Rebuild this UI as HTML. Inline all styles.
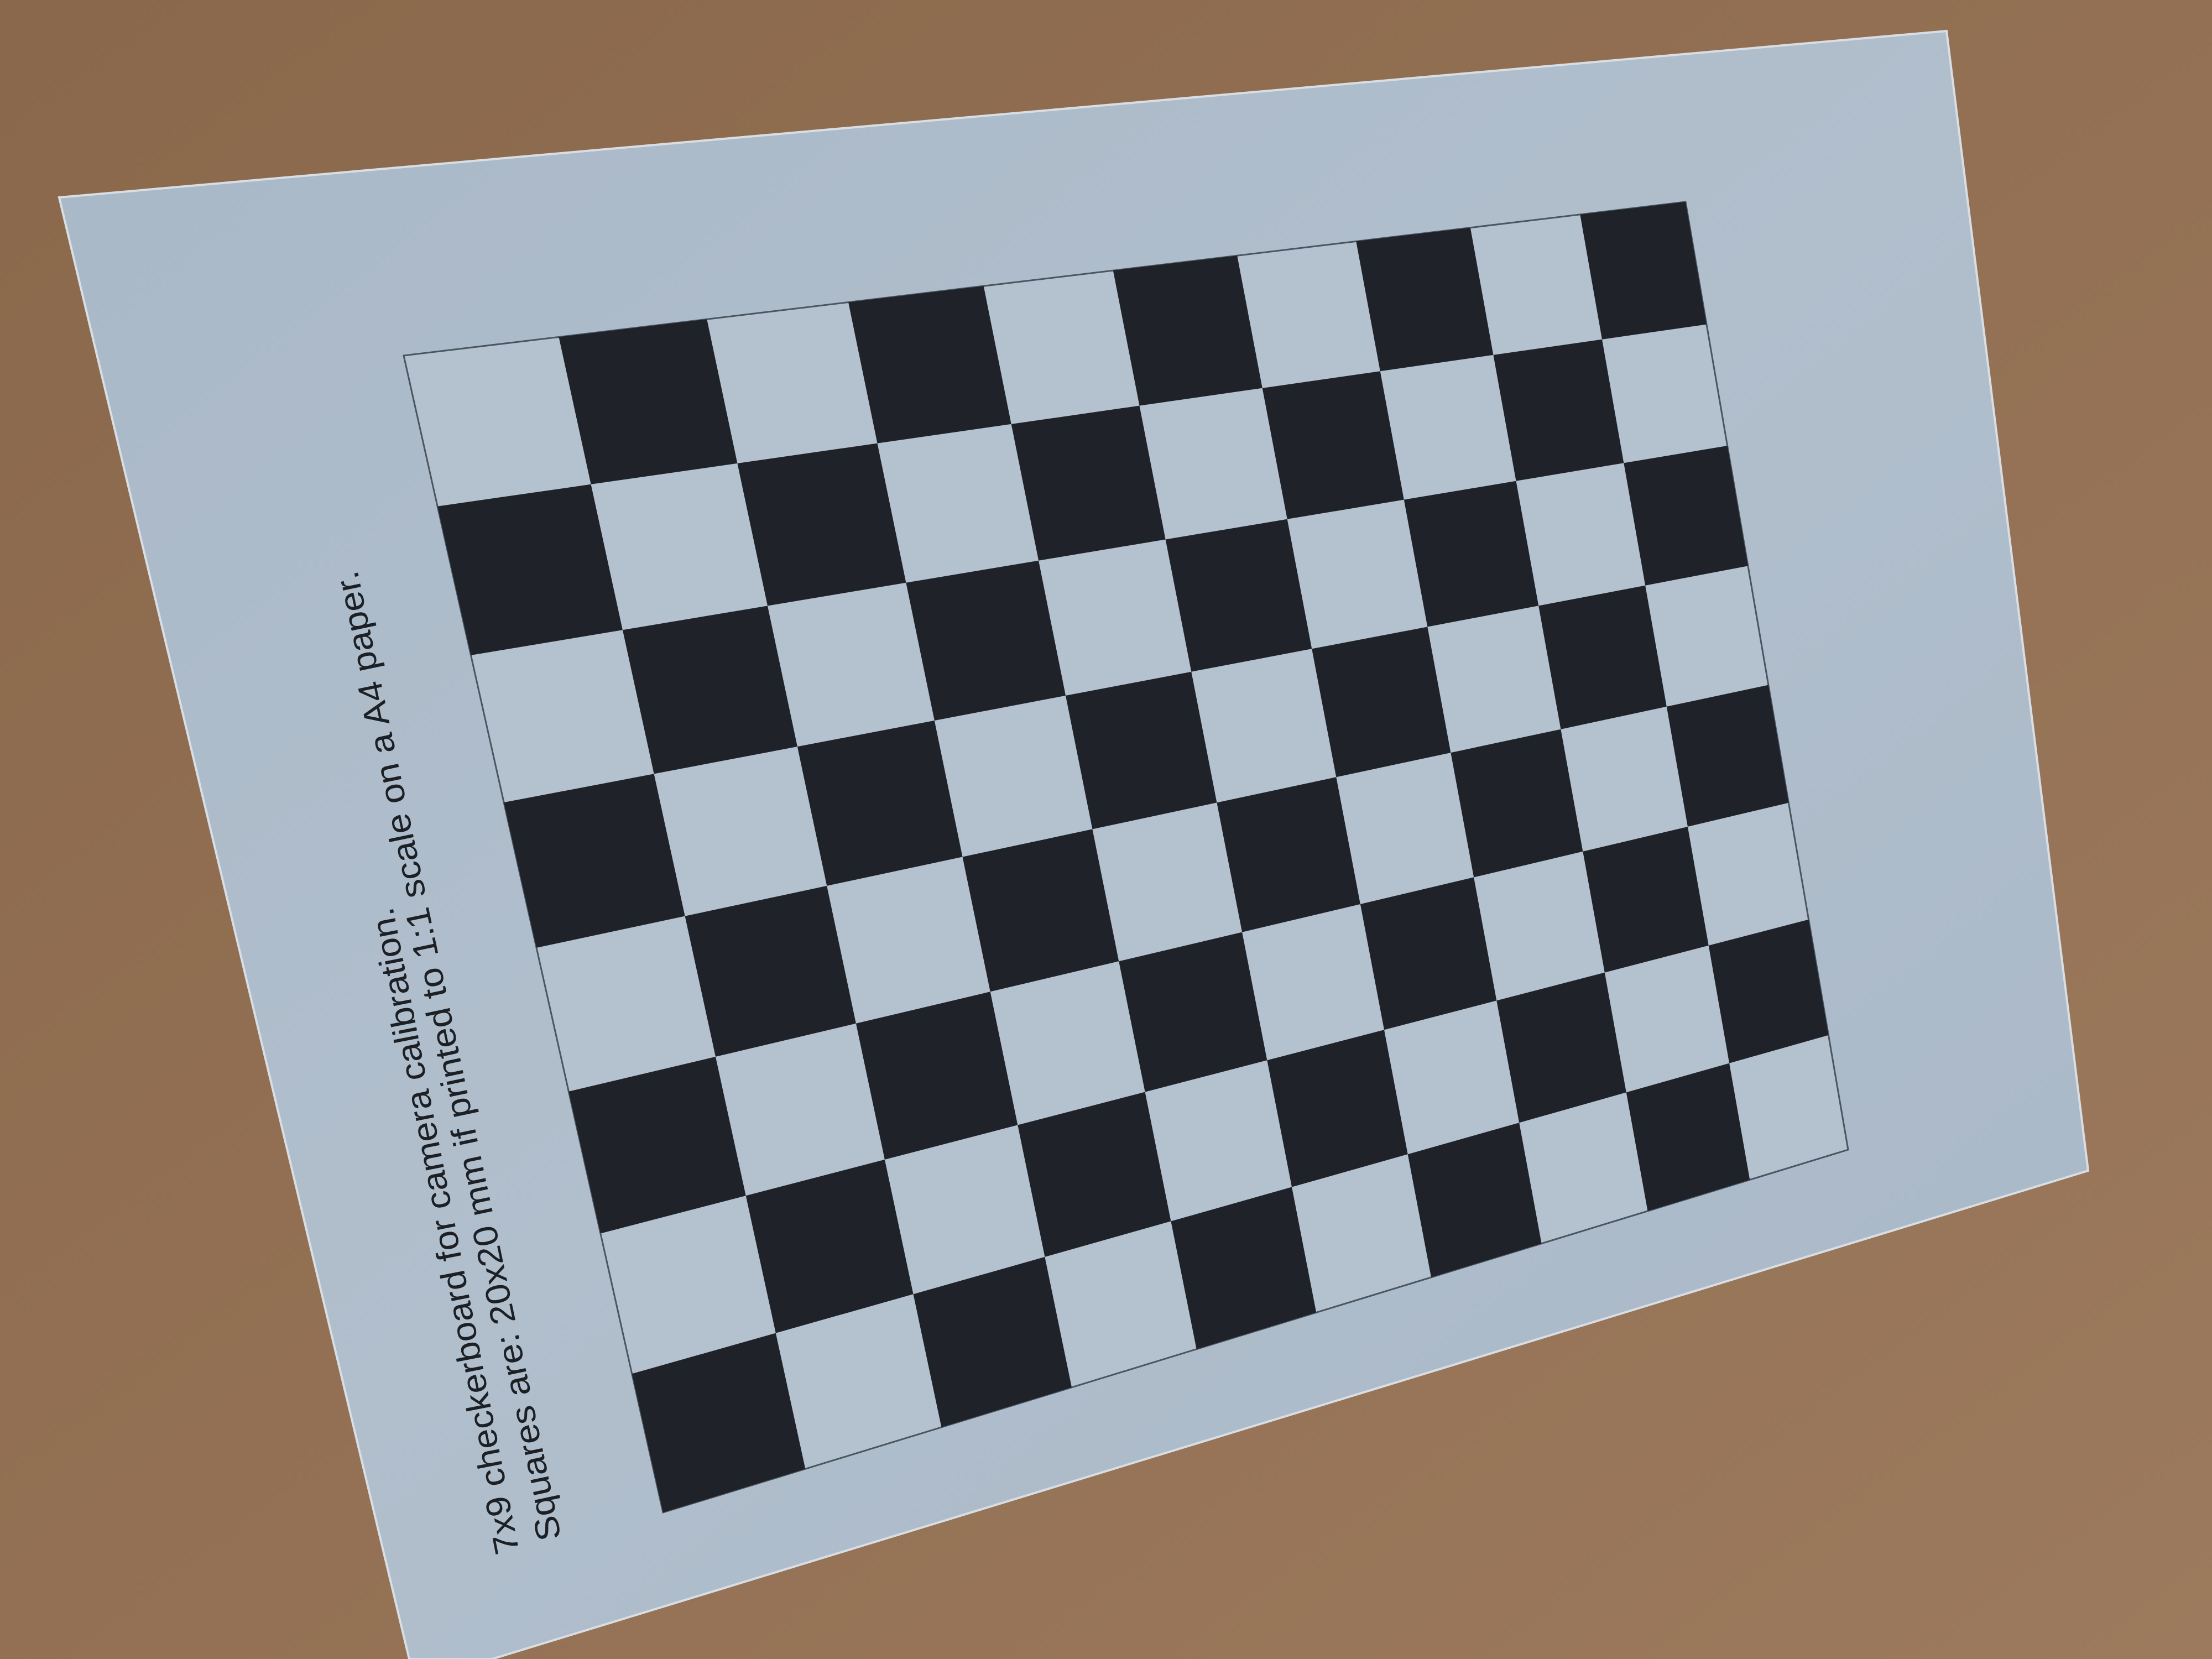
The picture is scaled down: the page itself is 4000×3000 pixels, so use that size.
<!DOCTYPE html>
<html><head><meta charset="utf-8"><style>
html,body{margin:0;padding:0;width:4000px;height:3000px;overflow:hidden;background:#94704f}
svg{display:block}
</style></head><body>
<svg id="s" width="4000" height="3000" viewBox="0 0 4000 3000" xmlns="http://www.w3.org/2000/svg">
<defs>
<linearGradient id="bg" x1="0" y1="0" x2="1" y2="1">
<stop offset="0" stop-color="#8a684b"/><stop offset="0.6" stop-color="#957255"/><stop offset="1" stop-color="#9c7a5d"/>
</linearGradient>
<linearGradient id="pp" x1="0" y1="0" x2="1" y2="1">
<stop offset="0" stop-color="#a9b8c7"/><stop offset="0.5" stop-color="#b1bfcd"/><stop offset="1" stop-color="#a8b7c6"/>
</linearGradient>
</defs>
<rect width="4000" height="3000" fill="url(#bg)"/>
<polygon points="107,357 3520,56 3776,2117 890,3000 740,3000" fill="url(#pp)" stroke="#d8dee4" stroke-width="4"/>
<g id="board"></g>
<g font-family="Liberation Sans, Arial, sans-serif" fill="#1c1f24">
<text transform="translate(939,2806) rotate(-101.1)" font-size="62" textLength="1190" lengthAdjust="spacingAndGlyphs">7x9 checkerboard for camera calibration.</text>
<text transform="translate(1015,2781) rotate(-101.9)" font-size="62" textLength="1790" lengthAdjust="spacingAndGlyphs">Squares are: 20x20 mm if printed to 1:1 scale on a A4 paper.</text>
</g>
</svg>
<script>
(function(){
var P=[[730,643],[3048,365],[3342,2079],[1199,2735]];
var x0=P[0][0],y0=P[0][1],x1=P[1][0],y1=P[1][1],x2=P[2][0],y2=P[2][1],x3=P[3][0],y3=P[3][1];
var dx1=x1-x2,dx2=x3-x2,dx3=x0-x1+x2-x3,dy1=y1-y2,dy2=y3-y2,dy3=y0-y1+y2-y3;
var den=dx1*dy2-dx2*dy1;
var g=(dx3*dy2-dx2*dy3)/den,h=(dx1*dy3-dx3*dy1)/den;
var a=x1-x0+g*x1,b=x3-x0+h*x3,c=x0,d=y1-y0+g*y1,e=y3-y0+h*y3,f=y0;
function m(u,v){var w=g*u+h*v+1;return ((a*u+b*v+c)/w).toFixed(1)+","+((d*u+e*v+f)/w).toFixed(1);}
var NS="http://www.w3.org/2000/svg",G=document.getElementById("board");
var bg=document.createElementNS(NS,"polygon");
bg.setAttribute("points",m(0,0)+" "+m(1,0)+" "+m(1,1)+" "+m(0,1));
bg.setAttribute("fill","#b4c1ce");bg.setAttribute("stroke","#4a5560");bg.setAttribute("stroke-width","3");
G.appendChild(bg);
var C=10,R=8;
for(var i=0;i<C;i++)for(var j=0;j<R;j++){
 if((i+j)%2==1){
  var u0=i/C,u1=(i+1)/C,v0=j/R,v1=(j+1)/R;
  var p=document.createElementNS(NS,"polygon");
  p.setAttribute("points",m(u0,v0)+" "+m(u1,v0)+" "+m(u1,v1)+" "+m(u0,v1));
  p.setAttribute("fill","#1f2329");
  G.appendChild(p);
 }
}
})();
</script>
</body></html>
